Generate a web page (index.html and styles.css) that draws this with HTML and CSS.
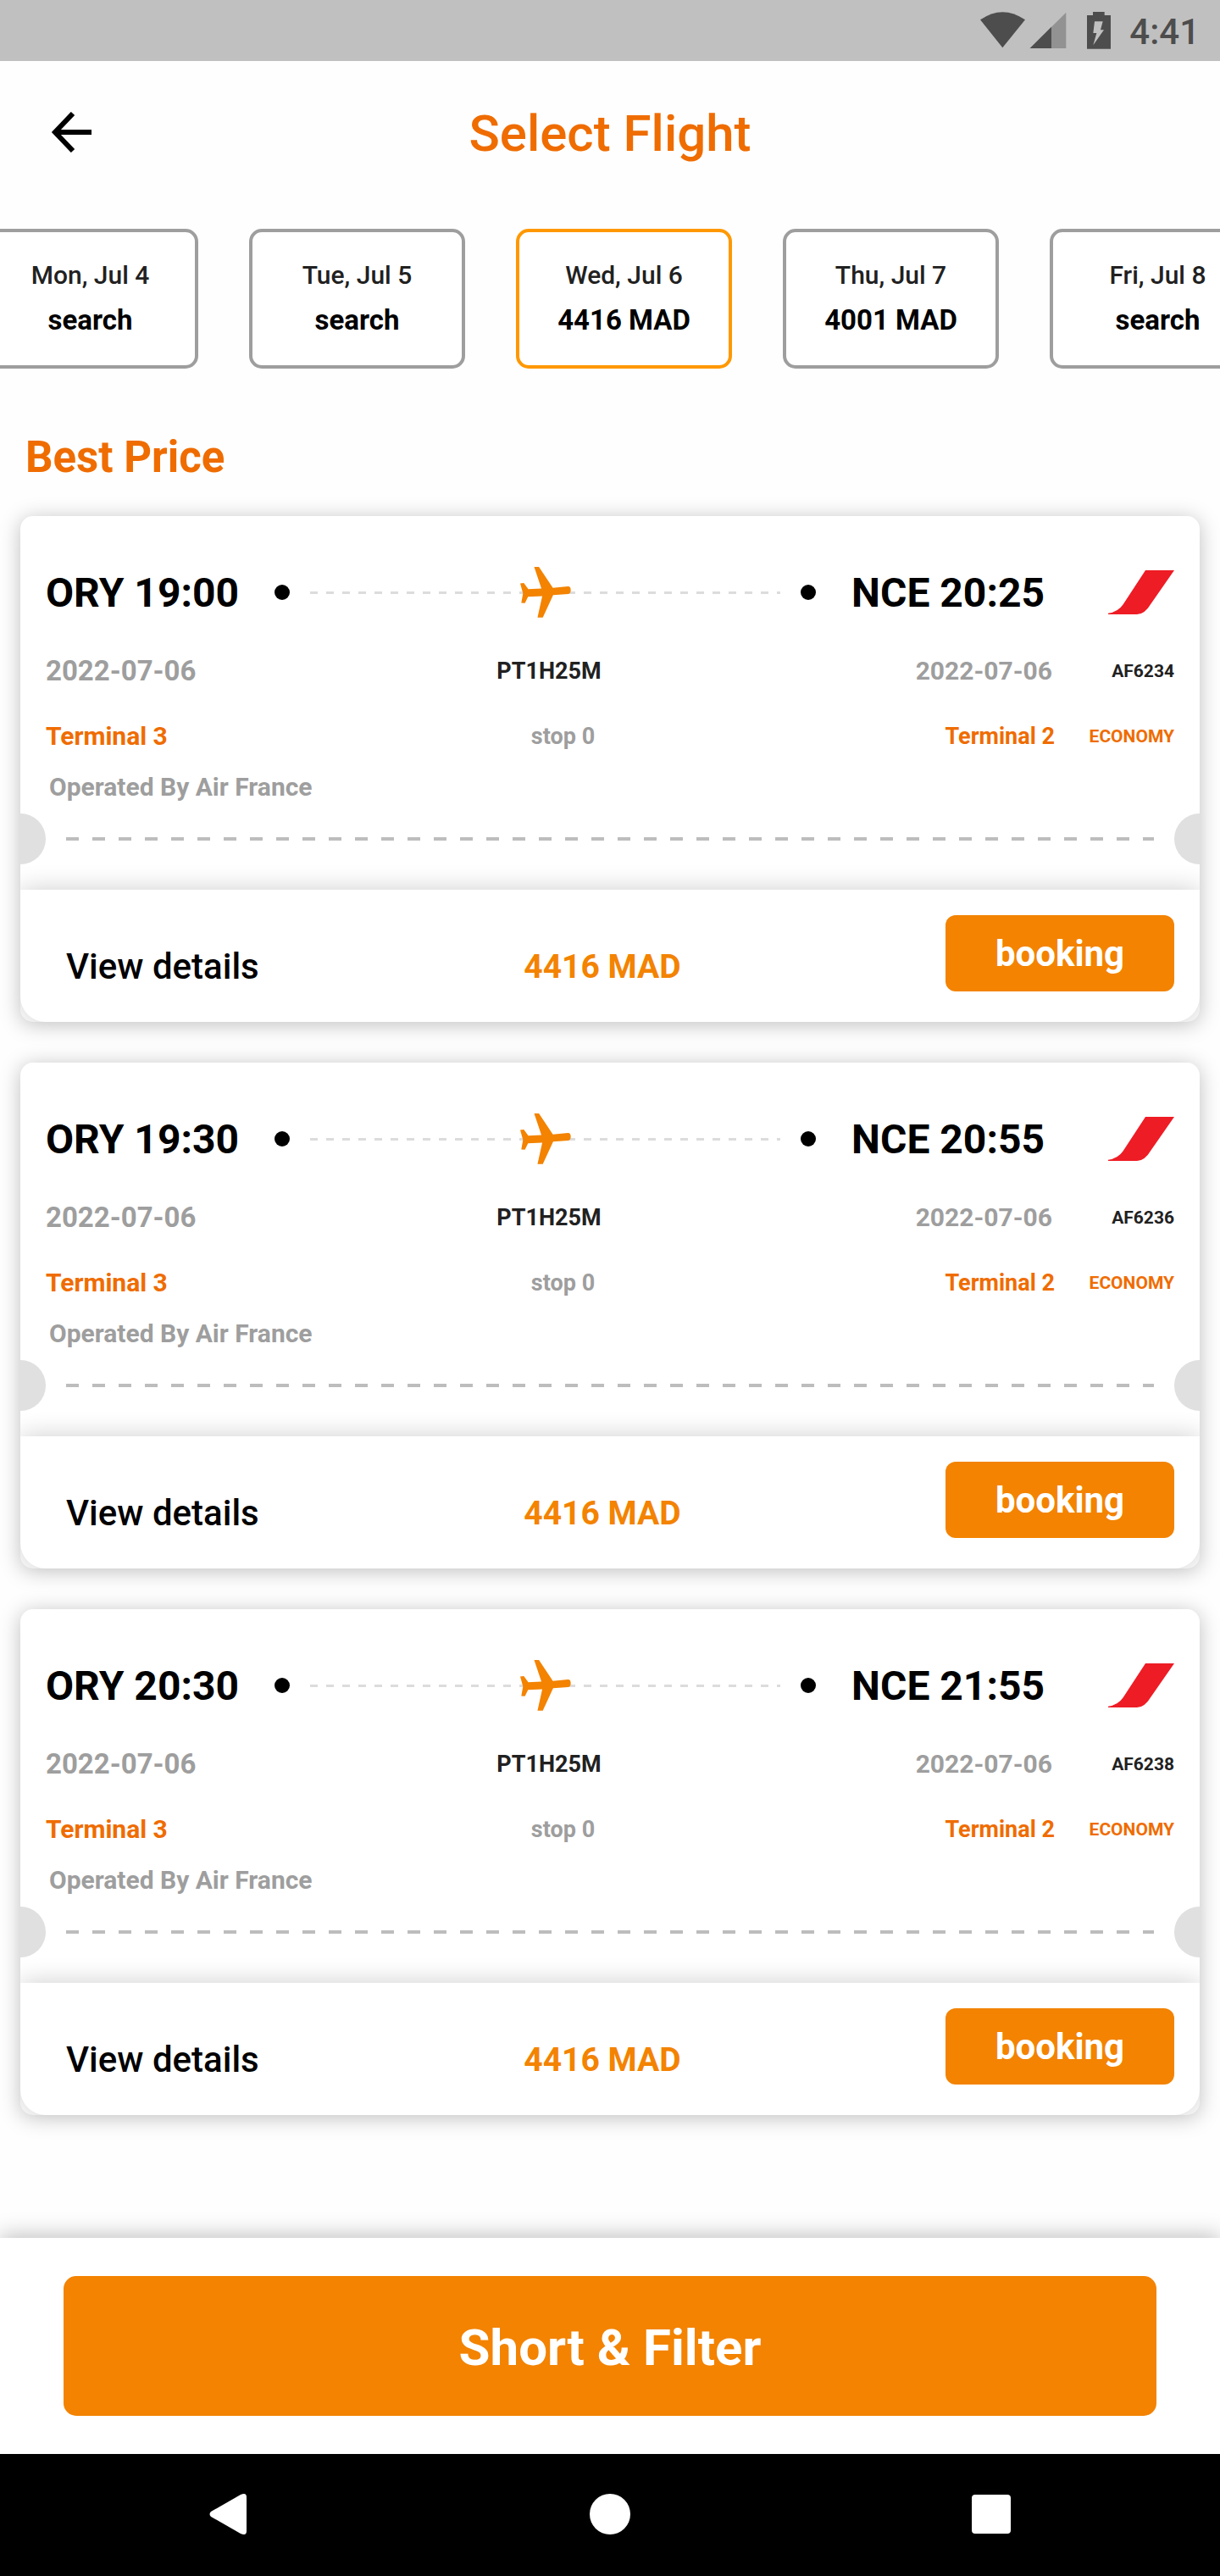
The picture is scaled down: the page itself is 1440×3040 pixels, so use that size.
FILE: index.html
```html
<!DOCTYPE html>
<html lang="en">
<head>
    <meta charset="UTF-8">
    <meta name="viewport" content="width=device-width, initial-scale=1.0">
    <title>Select Flight</title>
    <link rel="stylesheet" href="styles.css">
</head>
<body>
<!-- shared icons -->
<svg class="sprite" aria-hidden="true">
    <symbol id="plane" viewBox="399 269 182 182">
        <path fill="#f38300" d="M449 269H466L516 344L570 339Q580 339 580 352Q580 365 571 366L517 370L480 450H461L478 374L427 376L416 399L403 398L409 364L399 328L412 327L428 349L475 346Z"/>
    </symbol>
    <symbol id="airline" viewBox="1044 279 234 156">
        <path fill="#ee1c25" d="M1176 279H1278L1195 398Q1174 434 1146 435H1044V431Q1078 428 1097 400Z"/>
    </symbol>
</svg>

<div class="status-bar">
    <svg class="status-icons" viewBox="171 42 462 132">
        <path fill="#4d4d4d" d="M171 70Q250 15 330 70L250 169Z"/>
        <path fill="#929292" d="M475 44V171H347Z"/>
        <path fill="#4d4d4d" d="M423 95V171H347Z"/>
        <path fill="#4d4d4d" fill-rule="evenodd" d="M570 42H611V54H633V173H549V54H570ZM576 76L571 117H583L571 160L609 106H597L605 76Z"/>
    </svg>
    <span class="clock">4:41</span>
</div>

<header class="header">
    <a href="#" class="back" aria-label="Back">
        <svg viewBox="0 0 48 48"><path fill="none" stroke="#000" stroke-width="6" d="M26 2L5 24L26 46M5 24H48"/></svg>
    </a>
    <h1>Select Flight</h1>
</header>

<div class="dates">
    <button class="date">Mon, Jul 4<b>search</b></button>
    <button class="date">Tue, Jul 5<b>search</b></button>
    <button class="date active">Wed, Jul 6<b>4416 MAD</b></button>
    <button class="date">Thu, Jul 7<b>4001 MAD</b></button>
    <button class="date">Fri, Jul 8<b>search</b></button>
</div>

<main>
    <h2>Best Price</h2>

    <article class="card">
        <div class="route">
            <span>ORY 19:00</span>
            <div class="path"><i class="dot"></i><div class="line"><svg class="plane"><use href="#plane"/></svg></div><i class="dot"></i></div>
            <span>NCE 20:25</span>
            <svg class="airline"><use href="#airline"/></svg>
        </div>
        <div class="row">
            <span class="from-date">2022-07-06</span>
            <span class="duration">PT1H25M</span>
            <span class="to-date">2022-07-06</span>
            <span class="number">AF6234</span>
        </div>
        <div class="row terminals">
            <span class="from-terminal">Terminal 3</span>
            <span class="stops">stop 0</span>
            <span class="to-terminal">Terminal 2</span>
            <span class="cabin">ECONOMY</span>
        </div>
        <p class="operator">Operated By Air France</p>
        <div class="tear"></div>
        <div class="card-footer">
            <a href="#" class="details">View details</a>
            <span class="price">4416 MAD</span>
            <button class="booking">booking</button>
        </div>
    </article>

    <article class="card">
        <div class="route">
            <span>ORY 19:30</span>
            <div class="path"><i class="dot"></i><div class="line"><svg class="plane"><use href="#plane"/></svg></div><i class="dot"></i></div>
            <span>NCE 20:55</span>
            <svg class="airline"><use href="#airline"/></svg>
        </div>
        <div class="row">
            <span class="from-date">2022-07-06</span>
            <span class="duration">PT1H25M</span>
            <span class="to-date">2022-07-06</span>
            <span class="number">AF6236</span>
        </div>
        <div class="row terminals">
            <span class="from-terminal">Terminal 3</span>
            <span class="stops">stop 0</span>
            <span class="to-terminal">Terminal 2</span>
            <span class="cabin">ECONOMY</span>
        </div>
        <p class="operator">Operated By Air France</p>
        <div class="tear"></div>
        <div class="card-footer">
            <a href="#" class="details">View details</a>
            <span class="price">4416 MAD</span>
            <button class="booking">booking</button>
        </div>
    </article>

    <article class="card">
        <div class="route">
            <span>ORY 20:30</span>
            <div class="path"><i class="dot"></i><div class="line"><svg class="plane"><use href="#plane"/></svg></div><i class="dot"></i></div>
            <span>NCE 21:55</span>
            <svg class="airline"><use href="#airline"/></svg>
        </div>
        <div class="row">
            <span class="from-date">2022-07-06</span>
            <span class="duration">PT1H25M</span>
            <span class="to-date">2022-07-06</span>
            <span class="number">AF6238</span>
        </div>
        <div class="row terminals">
            <span class="from-terminal">Terminal 3</span>
            <span class="stops">stop 0</span>
            <span class="to-terminal">Terminal 2</span>
            <span class="cabin">ECONOMY</span>
        </div>
        <p class="operator">Operated By Air France</p>
        <div class="tear"></div>
        <div class="card-footer">
            <a href="#" class="details">View details</a>
            <span class="price">4416 MAD</span>
            <button class="booking">booking</button>
        </div>
    </article>
</main>

<div class="filter-bar">
    <button class="filter">Short &amp; Filter</button>
</div>

<nav class="system-nav">
    <button aria-label="Back"><svg viewBox="0 0 48 48"><path d="M3 21L38 1Q45 -2 45 4V44Q45 50 38 47L3 27Q0 24 3 21Z"/></svg></button>
    <button aria-label="Home"><svg viewBox="0 0 48 48"><circle cx="24" cy="24" r="24"/></svg></button>
    <button aria-label="Recent apps"><svg viewBox="0 0 48 48"><rect x="1" y="1" width="46" height="46" rx="4"/></svg></button>
</nav>
</body>
</html>
```
FILE: styles.css
```css
* {
    box-sizing: border-box;
}

body {
    display: flex;
    flex-direction: column;
    min-height: 100vh;
    margin: 0;
    font-family: Roboto, sans-serif;
    background-color: #fefefe;
    color: #000;
}

button {
    font-family: inherit;
    border: none;
    padding: 0;
    cursor: pointer;
}

a {
    color: inherit;
    text-decoration: none;
}

.sprite {
    position: absolute;
    width: 0;
    height: 0;
}

.status-bar {
    display: flex;
    justify-content: flex-end;
    align-items: center;
    gap: 22px;
    height: 72px;
    padding-right: 24px;
    background-color: #c0c0c0;
    color: #4d4d4d;
}

.status-icons {
    width: 154px;
    height: 44px;
}

.clock {
    padding-top: 2px;
    font-size: 42px;
    font-weight: 500;
}

.header {
    display: grid;
    grid-template-columns: 1fr auto 1fr;
    align-items: center;
    height: 168px;
    padding: 0 60px;
}

.back, .back svg {
    display: block;
    width: 48px;
    height: 48px;
}

h1 {
    margin: 2px 0 0;
    font-size: 60px;
    font-weight: 500;
    color: #ef6c00;
}

.dates {
    display: flex;
    gap: 60px;
    margin-top: 30px;
    margin-left: -21px;
    overflow: hidden;
}

.date {
    flex: 0 0 255px;
    height: 165px;
    padding-bottom: 3px;
    border: 4px solid #9e9e9e;
    border-radius: 15px;
    background-color: #fff;
    font-size: 30px;
    font-weight: 500;
    line-height: 53px;
    color: #212121;
}

.date b {
    display: block;
    font-size: 33px;
    font-weight: 700;
    color: #000;
}

.date.active {
    border-color: #ff9800;
}

main {
    flex: 1;
    padding: 75px 24px 60px;
}

h2 {
    margin: 0 6px 39px;
    font-size: 51px;
    line-height: 60px;
    color: #ef6c00;
}

.card {
    overflow: hidden;
    margin-bottom: 48px;
    padding-top: 60px;
    border-radius: 15px;
    background-color: #fff;
    box-shadow: 0 3px 24px rgba(0, 0, 0, 0.25);
}

.route {
    display: flex;
    align-items: center;
    height: 60px;
    padding: 0 30px;
    font-size: 48px;
    font-weight: 700;
}

.path {
    flex: 1;
    display: flex;
    align-items: center;
    gap: 24px;
    margin: 0 42px;
}

.dot {
    width: 18px;
    height: 18px;
    border-radius: 50%;
    background-color: #000;
}

.line {
    flex: 1;
    display: flex;
    align-items: center;
    justify-content: center;
    height: 60px;
    background: repeating-linear-gradient(to right, #dcdcdc 0 9px, transparent 9px 19px) center / 100% 3px no-repeat;
}

.plane {
    width: 60px;
    height: 60px;
}

.airline {
    width: 78px;
    height: 52px;
    margin-left: 75px;
}

.row {
    display: grid;
    grid-template-columns: 1fr auto 1fr 144px;
    margin-top: 43px;
    padding: 0 30px;
    font-weight: 700;
    line-height: 40px;
}

.from-date {
    font-size: 33px;
    color: #9e9e9e;
}

.duration {
    font-size: 27px;
    color: #212121;
}

.to-date {
    font-size: 30px;
    text-align: right;
    color: #9e9e9e;
}

.number, .cabin {
    font-size: 21px;
    text-align: right;
    color: #212121;
}

.terminals {
    grid-template-columns: 1fr auto 1fr 141px;
    margin-top: 37px;
    font-size: 27px;
    color: #ef6c00;
}

.from-terminal {
    font-size: 30px;
}

.stops {
    padding-left: 30px;
    color: #9e9e9e;
}

.to-terminal {
    text-align: right;
}

.cabin {
    color: #ef6c00;
}

.operator {
    margin: 20px 34px 11px;
    font-size: 30px;
    font-weight: 700;
    line-height: 40px;
    color: #9e9e9e;
}

/* perforated line with a half circle cut at each side */
.tear {
    display: flex;
    align-items: center;
    justify-content: space-between;
    height: 60px;
    margin-bottom: 30px;
    background: repeating-linear-gradient(to right, #bdbdbd 0 15px, transparent 15px 31px) 54px center / calc(100% - 108px) 4px no-repeat;
}

.tear::before, .tear::after {
    content: "";
    width: 30px;
    height: 60px;
    border-radius: 0 30px 30px 0;
    background-color: #e0e0e0;
}

.tear::after {
    border-radius: 30px 0 0 30px;
}

.card-footer {
    display: flex;
    justify-content: space-between;
    height: 156px;
    padding: 30px;
    border-radius: 0 0 30px 30px;
    background-color: #fff;
    box-shadow: 0 0 30px rgba(0, 0, 0, 0.2);
    line-height: 60px;
}

.details {
    margin-top: 31px;
    padding-left: 24px;
    font-size: 42px;
    font-weight: 500;
}

.price {
    margin-top: 31px;
    font-size: 39px;
    font-weight: 700;
    color: #f38300;
}

.booking {
    width: 270px;
    height: 90px;
    border-radius: 12px;
    background-color: #f38300;
    font-size: 42px;
    font-weight: 700;
    color: #fff;
}

.filter-bar {
    padding: 45px 75px;
    background-color: #fff;
    box-shadow: 0 -3px 24px rgba(0, 0, 0, 0.25);
}

.filter {
    display: block;
    width: 100%;
    height: 165px;
    padding-top: 3px;
    border-radius: 15px;
    background-color: #f38300;
    font-size: 60px;
    font-weight: 700;
    color: #fff;
}

.system-nav {
    display: grid;
    grid-template-columns: repeat(3, 1fr);
    height: 144px;
    padding: 0 45px;
    background-color: #000;
}

.system-nav button {
    background: none;
}

.system-nav svg {
    width: 48px;
    height: 48px;
    fill: #fff;
}
```
